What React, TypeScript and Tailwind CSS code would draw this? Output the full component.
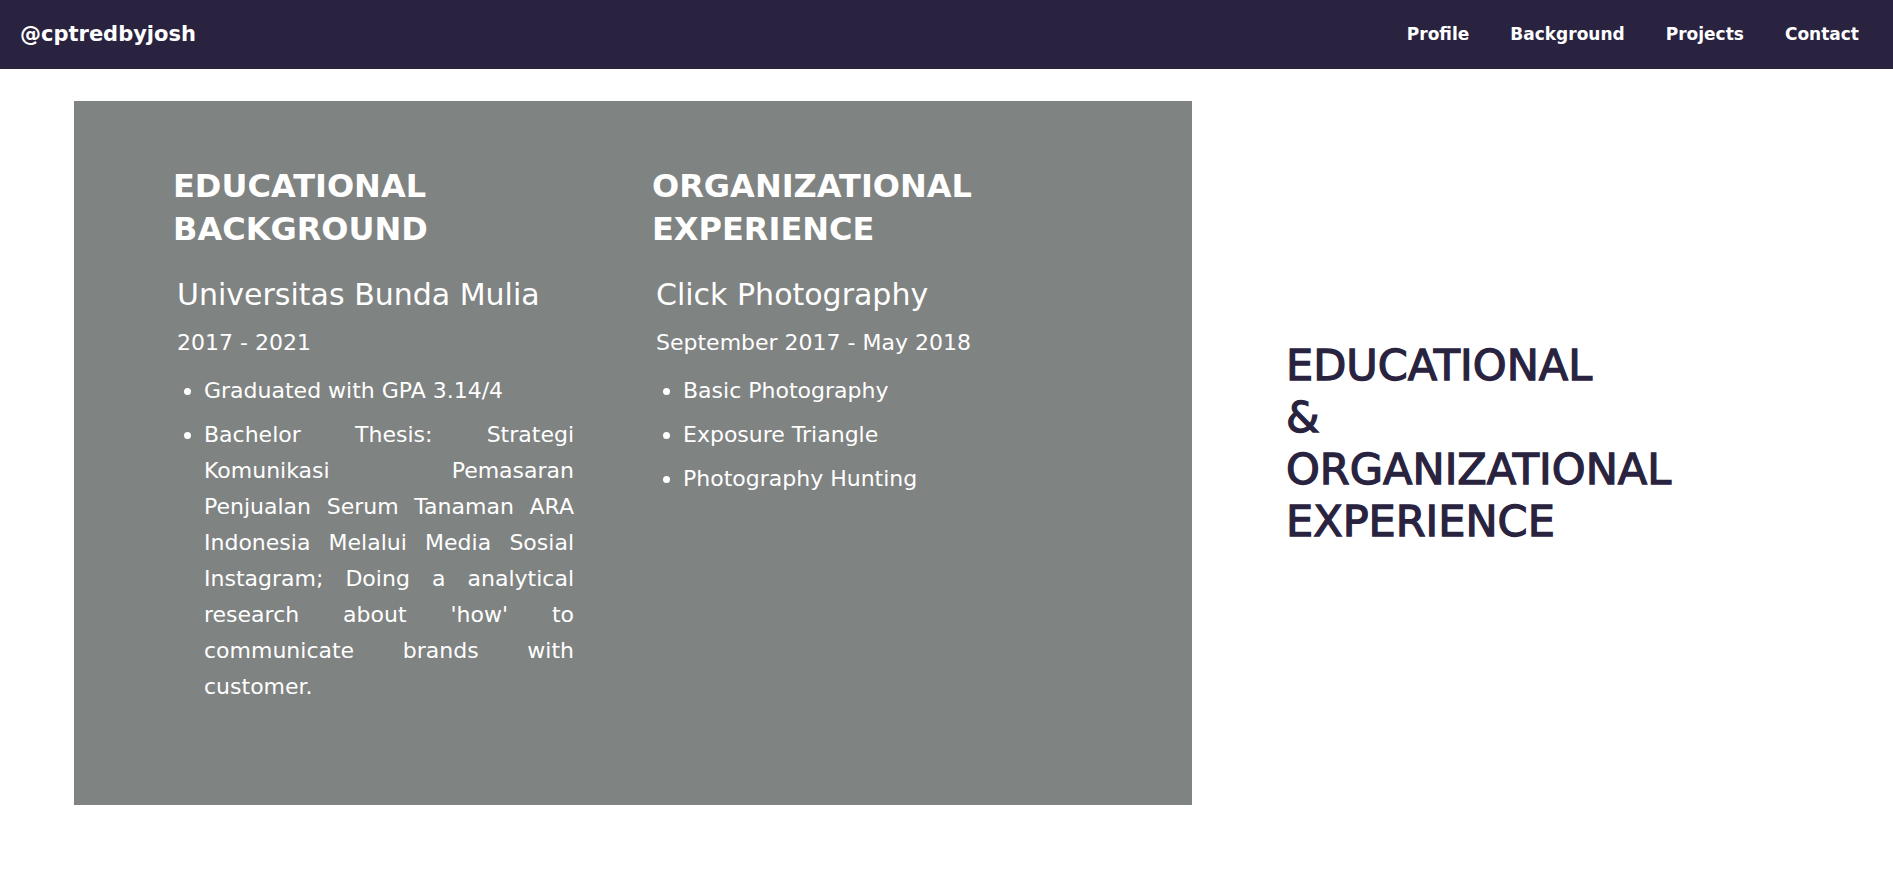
import React from 'react';

const navLinks = ['Profile', 'Background', 'Projects', 'Contact'];

const thesisLines = [
    'Bachelor Thesis: Strategi',
    'Komunikasi Pemasaran',
    'Penjualan Serum Tanaman ARA',
    'Indonesia Melalui Media Sosial',
    "Instagram; Doing a analytical",
    "research about 'how' to",
    'communicate brands with',
];

const Navbar: React.FC = () => (
    <nav className="h-[69px] bg-[#29233f] flex items-center justify-between pl-[20px] pr-[34px]">
        <a href="#" className="text-white font-bold text-[21px]">@cptredbyjosh</a>
        <ul className="flex items-center gap-[41px]">
            {navLinks.map((link) => (
                <li key={link}>
                    <a href="#" className="text-white font-bold text-[17px]">{link}</a>
                </li>
            ))}
        </ul>
    </nav>
);

const Section: React.FC<{ title: string[]; place: string; period: string; children: React.ReactNode }> = ({ title, place, period, children }) => (
    <div>
        <h2 className="text-[32px] leading-[43px] font-bold uppercase">
            {title.map((t) => (
                <span key={t} className="block">{t}</span>
            ))}
        </h2>
        <div className="pl-[4px]">
            <h3 className="mt-[26px] text-[30px] leading-[35px] font-normal">{place}</h3>
            <p className="mt-[16px] text-[22px] leading-[30px]">{period}</p>
            <ul className="mt-[15px] list-disc pl-[27px] text-[22px] leading-[36px] flex flex-col gap-[8px]">
                {children}
            </ul>
        </div>
    </div>
);

export default function App() {
    return (
        <div className="min-h-screen bg-white" style={{ fontFamily: '"DejaVu Sans", Lato, sans-serif' }}>
            <Navbar />
            <main className="flex pt-[32px]">
                <div className="ml-[74px] w-[1118px] h-[704px] bg-[#7f8382] text-white pl-[99px] pt-[64px] grid grid-cols-[401px_401px] gap-x-[78px] items-start">
                    <Section title={['Educational', 'Background']} place="Universitas Bunda Mulia" period="2017 - 2021">
                        <li>Graduated with GPA 3.14/4</li>
                        <li>
                            {thesisLines.map((line) => (
                                <span key={line} className="block text-justify [text-align-last:justify]">{line}</span>
                            ))}
                            <span className="block">customer.</span>
                        </li>
                    </Section>
                    <Section title={['Organizational', 'Experience']} place="Click Photography" period="September 2017 - May 2018">
                        <li>Basic Photography</li>
                        <li>Exposure Triangle</li>
                        <li>Photography Hunting</li>
                    </Section>
                </div>
                <div className="ml-[94px] self-center -mt-[20px]">
                    <h1 className="text-[#29233f] text-[43px] leading-[52px] font-normal uppercase [-webkit-text-stroke:1.3px_#29233f]">
                        <span className="block">Educational</span>
                        <span className="block">&amp;</span>
                        <span className="block">Organizational</span>
                        <span className="block">Experience</span>
                    </h1>
                </div>
            </main>
        </div>
    );
}
